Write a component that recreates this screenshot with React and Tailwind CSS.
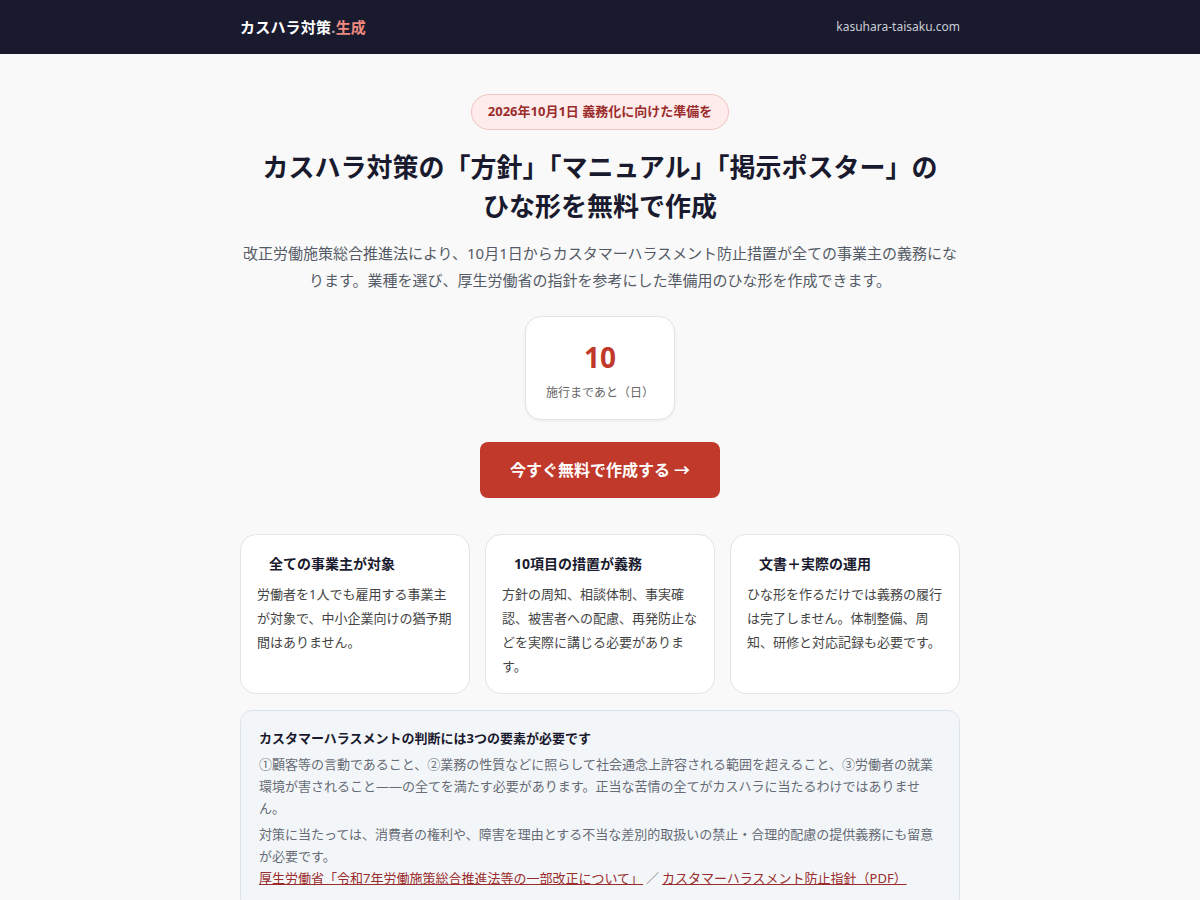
import React from "react";

const font = { fontFamily: '"Noto Sans", "Noto Sans CJK JP", sans-serif' };

const cards = [
  {
    title: "全ての事業主が対象",
    body: "労働者を1人でも雇用する事業主が対象で、中小企業向けの猶予期間はありません。",
  },
  {
    title: "10項目の措置が義務",
    body: "方針の周知、相談体制、事実確認、被害者への配慮、再発防止などを実際に講じる必要があります。",
  },
  {
    title: "文書＋実際の運用",
    body: "ひな形を作るだけでは義務の履行は完了しません。体制整備、周知、研修と対応記録も必要です。",
  },
];

const InfoCard = ({ title, body }) => (
  <div className="bg-white border border-[#e2e4e8] rounded-2xl px-4 pt-[17px] pb-[15px]">
    <h3 className="text-sm font-bold text-[#1a1a2e] leading-6 pl-3">{title}</h3>
    <p className="mt-1.5 text-[13px] leading-6 text-[#444]">{body}</p>
  </div>
);

export default function App() {
  return (
    <div className="min-h-screen bg-[#f9f9f9]" style={font}>
      {/* Header */}
      <header className="bg-[#1a1a2e] h-[54px]">
        <div className="max-w-[720px] mx-auto h-full flex items-center justify-between">
          <div className="text-[15px] font-bold text-white tracking-[0.2px]">
            カスハラ対策<span className="text-[#9aa0b0]">.</span>
            <span className="text-[#f08a80]">生成</span>
          </div>
          <div className="text-xs text-[#c9ccd6]">kasuhara-taisaku.com</div>
        </div>
      </header>

      <main className="max-w-[720px] mx-auto pt-10 pb-10">
        {/* Hero */}
        <div className="flex flex-col items-center text-center">
          <span className="inline-flex items-center h-9 px-4 rounded-full bg-[#fdeceb] border border-[#f3c4bf] text-[13px] font-bold text-[#9b2c2c]">
            2026年10月1日 義務化に向けた準備を
          </span>
          <h1 className="mt-[18px] text-[26px] font-bold leading-[39px] text-[#1a1a2e]">
            カスハラ対策の「方針」「マニュアル」「掲示ポスター」の
            <br />
            ひな形を無料で作成
          </h1>
          <p className="mt-[14px] text-[15px] leading-[27px] text-[#555b66]">
            改正労働施策総合推進法により、10月1日からカスタマーハラスメント防止措置が全ての事業主の義務になります。業種を選び、厚生労働省の指針を参考にした準備用のひな形を作成できます。
          </p>

          <div className="mt-[22px] w-[150px] h-[104px] pt-1 bg-white border border-[#e2e4e8] rounded-2xl shadow-[0_1px_3px_rgba(0,0,0,0.06)] flex flex-col items-center justify-center">
            <div className="text-[28px] font-bold leading-9 text-[#c0392b]">10</div>
            <div className="mt-2.5 text-xs text-[#666]">施行まであと（日）</div>
          </div>

          <button className="mt-[22px] w-[240px] h-14 rounded-lg bg-[#c0392b] text-white text-base font-bold">
            今すぐ無料で作成する →
          </button>
        </div>

        {/* Cards */}
        <div className="mt-9 grid grid-cols-3 gap-[15px]">
          {cards.map((c) => (
            <InfoCard key={c.title} {...c} />
          ))}
        </div>

        {/* Notice */}
        <div className="mt-4 bg-[#f3f6f9] border border-[#dde3ea] rounded-xl px-[18px] pt-[15px] pb-5">
          <h4 className="text-[13px] font-bold text-[#1a1a2e] leading-6">
            カスタマーハラスメントの判断には3つの要素が必要です
          </h4>
          <p className="mt-[3px] text-[13px] leading-[22px] text-[#666b75]">
            ①顧客等の言動であること、②業務の性質などに照らして社会通念上許容される範囲を超えること、③労働者の就業環境が害されること——の全てを満たす必要があります。正当な苦情の全てがカスハラに当たるわけではありません。
          </p>
          <p className="mt-1 text-[13px] leading-[22px] text-[#666b75]">
            対策に当たっては、消費者の権利や、障害を理由とする不当な差別的取扱いの禁止・合理的配慮の提供義務にも留意が必要です。
          </p>
          <p className="text-[13px] leading-[22px] text-[#888]">
            <a href="#" className="text-[#9b2c2c] underline">
              厚生労働省「令和7年労働施策総合推進法等の一部改正について」
            </a>
            <span className="mx-[3px]">／</span>
            <a href="#" className="text-[#9b2c2c] underline">
              カスタマーハラスメント防止指針（PDF）
            </a>
          </p>
        </div>
      </main>
    </div>
  );
}
